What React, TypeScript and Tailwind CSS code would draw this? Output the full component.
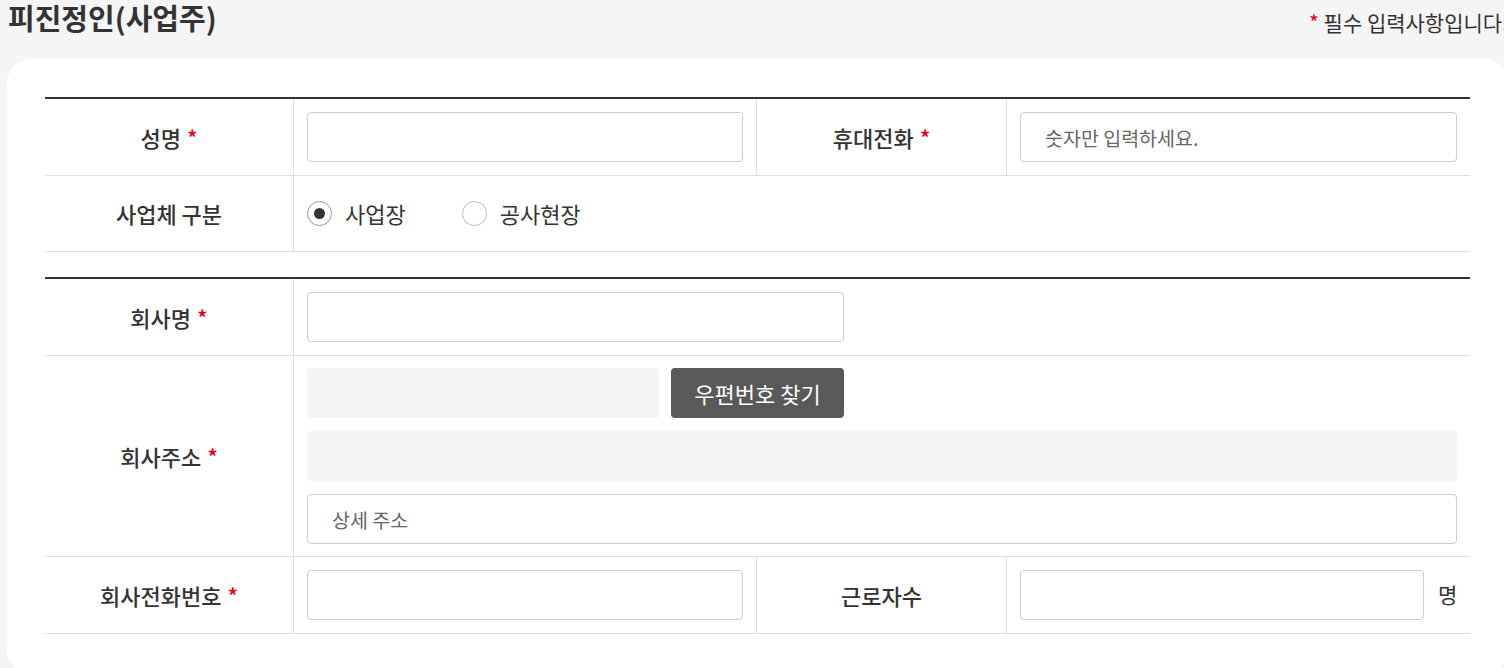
import React from "react";

const font = { fontFamily: '"Noto Sans CJK KR", "Noto Sans", sans-serif' };

const Req = () => <span className="ml-1.5 text-[#e60012]">*</span>;

const Label = ({ children, req }: { children: React.ReactNode; req?: boolean }) => (
  <div className="flex items-center justify-center border-r border-[#ddd] text-[22px] font-medium text-[#333]">
    {children}
    {req && <Req />}
  </div>
);

const Input = ({ placeholder, className = "" }: { placeholder?: string; className?: string }) => (
  <input
    placeholder={placeholder}
    className={`h-[50px] rounded-[4px] border border-[#ccc] bg-white px-6 text-[19.5px] text-[#333] outline-none placeholder:text-[#666] ${className}`}
  />
);

const Radio = ({ label, checked }: { label: string; checked?: boolean }) => (
  <label className="flex items-center gap-[13px] text-[22px] text-[#333]">
    <span
      className={`flex h-[25px] w-[25px] items-center justify-center rounded-full border bg-white ${
        checked ? "border-[#999]" : "border-[#bbb]"
      }`}
    >
      {checked && <span className="h-[11px] w-[11px] rounded-full bg-[#333]" />}
    </span>
    {label}
  </label>
);

const row = "grid grid-cols-[249px_463px_250px_463px] border-b border-[#ddd]";

export default function App() {
  return (
    <div className="h-[668px] w-full overflow-hidden bg-[#f5f5f5]" style={font}>
      <div className="w-[1508px] pl-[7px]">
        <div className="flex h-[59px] items-start justify-between">
          <h2 className="pl-px text-[29px] font-bold leading-[34px] text-[#333]">피진정인(사업주)</h2>
          <p className="mt-[7px] whitespace-nowrap text-[21px] leading-[30px] text-[#333]">
            <span className="text-[#e60012]">*</span> 필수 입력사항입니다.
          </p>
        </div>

        <div className="rounded-[24px] bg-white px-[38px] pb-[40px] pt-[38px]">
          <div className="border-t-2 border-[#333]">
            <div className={`${row} h-[77px]`}>
              <Label req>성명</Label>
              <div className="flex items-center border-r border-[#ddd] pl-[13px]">
                <Input className="w-[436px]" />
              </div>
              <Label req>휴대전화</Label>
              <div className="flex items-center pl-[13px]">
                <Input className="w-[437px]" placeholder="숫자만 입력하세요." />
              </div>
            </div>
            <div className={`${row} h-[76px]`}>
              <Label>사업체 구분</Label>
              <div className="col-span-3 flex items-center gap-[56px] pl-[13px]">
                <Radio label="사업장" checked />
                <Radio label="공사현장" />
              </div>
            </div>
          </div>

          <div className="mt-[25px] border-t-2 border-[#333]">
            <div className={`${row} h-[77px]`}>
              <Label req>회사명</Label>
              <div className="col-span-3 flex items-center pl-[13px]">
                <Input className="w-[537px]" />
              </div>
            </div>
            <div className={`${row} h-[201px]`}>
              <Label req>회사주소</Label>
              <div className="col-span-3 flex flex-col gap-[13px] py-[12px] pl-[13px] pr-[13px]">
                <div className="flex gap-3">
                  <div className="h-[50px] w-[352px] rounded-[4px] bg-[#f5f5f5]" />
                  <button className="h-[50px] w-[173px] rounded-[4px] bg-[#595959] text-[22px] text-white">
                    우편번호 찾기
                  </button>
                </div>
                <div className="h-[50px] w-full rounded-[4px] bg-[#f5f5f5]" />
                <Input className="w-full" placeholder="상세 주소" />
              </div>
            </div>
            <div className={`${row} h-[77px]`}>
              <Label req>회사전화번호</Label>
              <div className="flex items-center border-r border-[#ddd] pl-[13px]">
                <Input className="w-[436px]" />
              </div>
              <Label>근로자수</Label>
              <div className="flex items-center pl-[13px]">
                <Input className="w-[404px]" />
                <span className="ml-[14px] text-[21px] text-[#333]">명</span>
              </div>
            </div>
          </div>
        </div>
      </div>
    </div>
  );
}
